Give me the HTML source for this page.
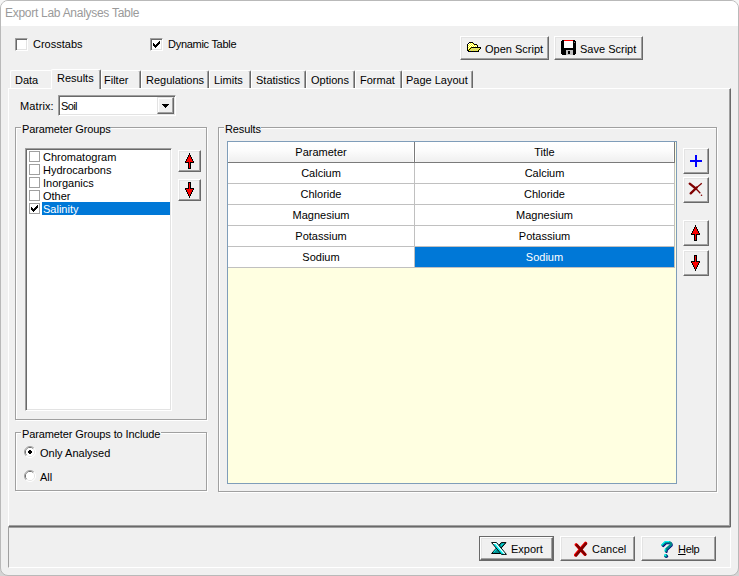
<!DOCTYPE html>
<html><head><meta charset="utf-8">
<title>Export Lab Analyses Table</title>
<style>
*{box-sizing:border-box;margin:0;padding:0}
html,body{width:739px;height:576px;overflow:hidden;background:linear-gradient(#f6f6f6,#f0f0f0 50%,#d4d4d4)}
body{font-family:"Liberation Sans",sans-serif;font-size:11px;color:#000;position:relative}
.abs{position:absolute}
#win{position:absolute;left:0;top:0;width:739px;height:576px;background:#f0f0f0;border-radius:8px;overflow:hidden;border:1px solid #b9b9b9}
#in{position:absolute;left:-1px;top:-1px;width:739px;height:576px}
#titlebar{position:absolute;left:0;top:0;width:739px;height:26px;background:#fff}
#title{position:absolute;left:5px;top:6px;font-size:12px;line-height:14px;color:#9a9a9a;white-space:nowrap;letter-spacing:-0.28px}
.t{position:absolute;white-space:nowrap;line-height:13px;height:13px}
.sunk{border:1px solid;border-color:#a0a0a0 #fff #fff #a0a0a0;box-shadow:inset 1px 1px 0 #696969, inset -1px -1px 0 #e3e3e3}
.btn{background:#f0f0f0;border:1px solid;border-color:#fff #696969 #696969 #fff;box-shadow:inset -1px -1px 0 #a0a0a0, inset 1px 1px 0 #e3e3e3}
.sbtn{background:#f0f0f0;border:1px solid;border-color:#e3e3e3 #696969 #696969 #e3e3e3;box-shadow:inset -1px -1px 0 #a0a0a0, inset 1px 1px 0 #fff}
.tab{position:absolute;top:70px;height:19px;border:1px solid;border-color:#fff #696969 transparent #fff;border-radius:2px 2px 0 0;box-shadow:inset -1px 0 0 #a0a0a0, inset 1px 1px 0 #f0f0f0}
.cbf{position:absolute;width:11px;height:11px;background:#fff;border:1px solid #a0a0a0}
.c{text-align:center}
</style></head><body>
<div id="win"><div id="in">
<div id="titlebar"><div id="title">Export Lab Analyses Table</div></div>

<div class="abs sunk" style="left:15px;top:38px;width:13px;height:13px;background:#fff;"></div>
<div class="t" style="left:33px;top:38px;">Crosstabs</div>
<div class="abs sunk" style="left:150px;top:38px;width:13px;height:13px;background:#fff;"></div>
<svg class="abs" style="left:153px;top:41px" width="7" height="7" viewBox="0 0 7 7" shape-rendering="crispEdges"><path d="M0 2h1v1h1v1h1v-1h1v-1h1v-1h1v-1h1v3h-1v1h-1v1h-1v1h-1v1h-1v-1h-1v-1h-1z" fill="#000"/></svg>
<div class="t" style="left:168px;top:38px;letter-spacing:-0.28px">Dynamic Table</div>
<div class="abs btn" style="left:460px;top:36px;width:89px;height:24px"></div>
<svg class="abs" style="left:467px;top:42px" width="14" height="10" viewBox="0 0 14 10" shape-rendering="crispEdges"><rect x="2" y="0" width="1" height="1" fill="#000"/><rect x="3" y="0" width="1" height="1" fill="#000"/><rect x="4" y="0" width="1" height="1" fill="#000"/><rect x="5" y="0" width="1" height="1" fill="#000"/><rect x="1" y="1" width="1" height="1" fill="#000"/><rect x="2" y="1" width="1" height="1" fill="#ffffff"/><rect x="3" y="1" width="1" height="1" fill="#ffff00"/><rect x="4" y="1" width="1" height="1" fill="#ffffff"/><rect x="5" y="1" width="1" height="1" fill="#ffff00"/><rect x="6" y="1" width="1" height="1" fill="#000"/><rect x="0" y="2" width="1" height="1" fill="#000"/><rect x="1" y="2" width="1" height="1" fill="#ffffff"/><rect x="2" y="2" width="1" height="1" fill="#ffff00"/><rect x="3" y="2" width="1" height="1" fill="#ffffff"/><rect x="4" y="2" width="1" height="1" fill="#ffff00"/><rect x="5" y="2" width="1" height="1" fill="#ffffff"/><rect x="6" y="2" width="1" height="1" fill="#ffff00"/><rect x="7" y="2" width="1" height="1" fill="#000"/><rect x="8" y="2" width="1" height="1" fill="#000"/><rect x="9" y="2" width="1" height="1" fill="#000"/><rect x="0" y="3" width="1" height="1" fill="#000"/><rect x="1" y="3" width="1" height="1" fill="#ffff00"/><rect x="2" y="3" width="1" height="1" fill="#ffffff"/><rect x="3" y="3" width="1" height="1" fill="#ffff00"/><rect x="4" y="3" width="1" height="1" fill="#ffffff"/><rect x="5" y="3" width="1" height="1" fill="#ffff00"/><rect x="6" y="3" width="1" height="1" fill="#ffffff"/><rect x="7" y="3" width="1" height="1" fill="#ffff00"/><rect x="8" y="3" width="1" height="1" fill="#ffffff"/><rect x="9" y="3" width="1" height="1" fill="#ffff00"/><rect x="10" y="3" width="1" height="1" fill="#000"/><rect x="0" y="4" width="1" height="1" fill="#000"/><rect x="1" y="4" width="1" height="1" fill="#ffffff"/><rect x="2" y="4" width="1" height="1" fill="#ffff00"/><rect x="3" y="4" width="1" height="1" fill="#ffffff"/><rect x="4" y="4" width="1" height="1" fill="#ffff00"/><rect x="5" y="4" width="1" height="1" fill="#ffffff"/><rect x="6" y="4" width="1" height="1" fill="#ffff00"/><rect x="7" y="4" width="1" height="1" fill="#ffffff"/><rect x="8" y="4" width="1" height="1" fill="#ffff00"/><rect x="9" y="4" width="1" height="1" fill="#ffffff"/><rect x="10" y="4" width="1" height="1" fill="#000"/><rect x="0" y="5" width="1" height="1" fill="#000"/><rect x="1" y="5" width="1" height="1" fill="#ffff00"/><rect x="2" y="5" width="1" height="1" fill="#ffffff"/><rect x="3" y="5" width="1" height="1" fill="#ffff00"/><rect x="4" y="5" width="1" height="1" fill="#000"/><rect x="5" y="5" width="1" height="1" fill="#000"/><rect x="6" y="5" width="1" height="1" fill="#000"/><rect x="7" y="5" width="1" height="1" fill="#000"/><rect x="8" y="5" width="1" height="1" fill="#000"/><rect x="9" y="5" width="1" height="1" fill="#000"/><rect x="10" y="5" width="1" height="1" fill="#000"/><rect x="11" y="5" width="1" height="1" fill="#000"/><rect x="12" y="5" width="1" height="1" fill="#000"/><rect x="13" y="5" width="1" height="1" fill="#000"/><rect x="0" y="6" width="1" height="1" fill="#000"/><rect x="1" y="6" width="1" height="1" fill="#ffffff"/><rect x="2" y="6" width="1" height="1" fill="#ffff00"/><rect x="3" y="6" width="1" height="1" fill="#000"/><rect x="4" y="6" width="1" height="1" fill="#ffff00"/><rect x="5" y="6" width="1" height="1" fill="#c0c0c0"/><rect x="6" y="6" width="1" height="1" fill="#ffff00"/><rect x="7" y="6" width="1" height="1" fill="#c0c0c0"/><rect x="8" y="6" width="1" height="1" fill="#ffff00"/><rect x="9" y="6" width="1" height="1" fill="#c0c0c0"/><rect x="10" y="6" width="1" height="1" fill="#ffff00"/><rect x="11" y="6" width="1" height="1" fill="#c0c0c0"/><rect x="12" y="6" width="1" height="1" fill="#ffff00"/><rect x="13" y="6" width="1" height="1" fill="#000"/><rect x="0" y="7" width="1" height="1" fill="#000"/><rect x="1" y="7" width="1" height="1" fill="#ffff00"/><rect x="2" y="7" width="1" height="1" fill="#000"/><rect x="3" y="7" width="1" height="1" fill="#ffff00"/><rect x="4" y="7" width="1" height="1" fill="#c0c0c0"/><rect x="5" y="7" width="1" height="1" fill="#ffff00"/><rect x="6" y="7" width="1" height="1" fill="#c0c0c0"/><rect x="7" y="7" width="1" height="1" fill="#ffff00"/><rect x="8" y="7" width="1" height="1" fill="#c0c0c0"/><rect x="9" y="7" width="1" height="1" fill="#ffff00"/><rect x="10" y="7" width="1" height="1" fill="#c0c0c0"/><rect x="11" y="7" width="1" height="1" fill="#ffff00"/><rect x="12" y="7" width="1" height="1" fill="#000"/><rect x="0" y="8" width="1" height="1" fill="#000"/><rect x="1" y="8" width="1" height="1" fill="#000"/><rect x="2" y="8" width="1" height="1" fill="#ffff00"/><rect x="3" y="8" width="1" height="1" fill="#c0c0c0"/><rect x="4" y="8" width="1" height="1" fill="#ffff00"/><rect x="5" y="8" width="1" height="1" fill="#c0c0c0"/><rect x="6" y="8" width="1" height="1" fill="#ffff00"/><rect x="7" y="8" width="1" height="1" fill="#c0c0c0"/><rect x="8" y="8" width="1" height="1" fill="#ffff00"/><rect x="9" y="8" width="1" height="1" fill="#c0c0c0"/><rect x="10" y="8" width="1" height="1" fill="#ffff00"/><rect x="11" y="8" width="1" height="1" fill="#000"/><rect x="1" y="9" width="1" height="1" fill="#000"/><rect x="2" y="9" width="1" height="1" fill="#000"/><rect x="3" y="9" width="1" height="1" fill="#000"/><rect x="4" y="9" width="1" height="1" fill="#000"/><rect x="5" y="9" width="1" height="1" fill="#000"/><rect x="6" y="9" width="1" height="1" fill="#000"/><rect x="7" y="9" width="1" height="1" fill="#000"/><rect x="8" y="9" width="1" height="1" fill="#000"/><rect x="9" y="9" width="1" height="1" fill="#000"/><rect x="10" y="9" width="1" height="1" fill="#000"/><rect x="11" y="9" width="1" height="1" fill="#000"/></svg>
<div class="t" style="left:485px;top:43px;">Open Script</div>
<div class="abs btn" style="left:554px;top:36px;width:89px;height:24px"></div>
<svg class="abs" style="left:561px;top:40px" width="15" height="15" viewBox="0 0 15 15" shape-rendering="crispEdges">
<path d="M1 0h13v1h1v13h-1v1H1v-1H0V1h1z" fill="#000"/>
<rect x="3" y="0" width="9" height="1" fill="#ff0000"/>
<rect x="3" y="1" width="9" height="7" fill="#fff"/>
<rect x="5" y="10" width="7" height="5" fill="#c0c0c0"/>
<rect x="7" y="11" width="2" height="3" fill="#000"/>
<rect x="13" y="2" width="1" height="1" fill="#808080"/>
</svg>
<div class="t" style="left:580px;top:43px;">Save Script</div>
<div class="tab" style="left:10px;width:42px;border-right:none;box-shadow:inset 1px 1px 0 #f0f0f0"></div>
<div class="t" style="left:15px;top:74px;">Data</div>
<div class="tab" style="left:101px;width:40px"></div>
<div class="t" style="left:104px;top:74px;">Filter</div>
<div class="tab" style="left:141px;width:68px"></div>
<div class="t" style="left:146px;top:74px;">Regulations</div>
<div class="tab" style="left:209px;width:42px"></div>
<div class="t" style="left:214px;top:74px;">Limits</div>
<div class="tab" style="left:251px;width:55px"></div>
<div class="t" style="left:256px;top:74px;">Statistics</div>
<div class="tab" style="left:306px;width:49px"></div>
<div class="t" style="left:311px;top:74px;">Options</div>
<div class="tab" style="left:355px;width:47px"></div>
<div class="t" style="left:360px;top:74px;">Format</div>
<div class="tab" style="left:402px;width:71px"></div>
<div class="t" style="left:406px;top:74px;">Page Layout</div>
<div class="abs" style="left:8px;top:88px;width:723px;height:439px;border:1px solid;border-color:#fff #696969 #696969 #fff;box-shadow:inset -1px -1px 0 #a0a0a0"></div>
<div class="tab" style="left:51px;top:69px;width:50px;height:20px;background:#f0f0f0;border-bottom:none"></div>
<div class="abs" style="left:52px;top:88px;width:47px;height:2px;background:#f0f0f0"></div>
<div class="t" style="left:57px;top:72px;">Results</div>
<div class="abs" style="left:8px;top:527px;width:723px;height:41px;border:1px solid;border-color:#a0a0a0 #fff #fff #a0a0a0"></div>
<div class="t" style="left:20px;top:100px;letter-spacing:0.1px">Matrix:</div>
<div class="abs sunk" style="left:58px;top:95px;width:118px;height:21px;background:#fff;"></div>
<div class="t" style="left:61px;top:100px;letter-spacing:-0.6px">Soil</div>
<div class="abs sbtn" style="left:157px;top:97px;width:17px;height:17px"></div>
<svg class="abs" style="left:162px;top:104px" width="7" height="4" viewBox="0 0 7 4" shape-rendering="crispEdges"><path d="M0 0h7v1h-1v1h-1v1h-1v1h-1v-1h-1v-1h-1v-1h-1z" fill="#000"/></svg>
<div class="abs" style="left:16px;top:128px;width:192px;height:293px;border:1px solid #fff"></div><div class="abs" style="left:15px;top:127px;width:192px;height:293px;border:1px solid #a0a0a0;box-shadow:inset 1px 1px 0 #fff"></div><div class="abs" style="left:21px;top:126px;width:88px;height:4px;background:#f0f0f0"></div><div class="t" style="left:22px;top:123px;letter-spacing:-0.11px">Parameter Groups</div>
<div class="abs sunk" style="left:25px;top:148px;width:147px;height:263px;background:#fff;"></div>
<div class="abs" style="left:42px;top:202px;width:128px;height:13px;background:#0078d7"></div>
<div class="cbf" style="left:29px;top:151px"></div>
<div class="t" style="left:43px;top:151px;">Chromatogram</div>
<div class="cbf" style="left:29px;top:164px"></div>
<div class="t" style="left:43px;top:164px;">Hydrocarbons</div>
<div class="cbf" style="left:29px;top:177px"></div>
<div class="t" style="left:43px;top:177px;">Inorganics</div>
<div class="cbf" style="left:29px;top:190px"></div>
<div class="t" style="left:43px;top:190px;">Other</div>
<div class="cbf" style="left:29px;top:203px"></div>
<div class="t" style="left:43px;top:203px;color:#fff">Salinity</div>
<svg class="abs" style="left:31px;top:205px" width="7" height="7" viewBox="0 0 7 7" shape-rendering="crispEdges"><path d="M0 2h1v1h1v1h1v-1h1v-1h1v-1h1v-1h1v3h-1v1h-1v1h-1v1h-1v1h-1v-1h-1v-1h-1z" fill="#000"/></svg>
<div class="abs btn" style="left:178px;top:150px;width:23px;height:22px"></div>
<svg class="abs" style="left:185px;top:153px" width="9" height="16" viewBox="0 0 9 16" shape-rendering="crispEdges"><rect x="4" y="0" width="1" height="1" fill="#000"/><rect x="4" y="1" width="1" height="1" fill="#000"/><rect x="3" y="2" width="3" height="1" fill="#000"/><rect x="3" y="3" width="3" height="1" fill="#000"/><rect x="2" y="4" width="5" height="1" fill="#000"/><rect x="2" y="5" width="5" height="1" fill="#000"/><rect x="1" y="6" width="7" height="1" fill="#000"/><rect x="1" y="7" width="7" height="1" fill="#000"/><rect x="0" y="8" width="9" height="1" fill="#000"/><rect x="0" y="9" width="9" height="1" fill="#000"/><rect x="3" y="10" width="3" height="1" fill="#000"/><rect x="3" y="11" width="3" height="1" fill="#000"/><rect x="3" y="12" width="3" height="1" fill="#000"/><rect x="3" y="13" width="3" height="1" fill="#000"/><rect x="3" y="14" width="3" height="1" fill="#000"/><rect x="3" y="15" width="3" height="1" fill="#000"/><rect x="4" y="2" width="1" height="1" fill="#ff0000"/><rect x="4" y="3" width="1" height="1" fill="#ff0000"/><rect x="3" y="4" width="3" height="1" fill="#ff0000"/><rect x="3" y="5" width="3" height="1" fill="#ff0000"/><rect x="2" y="6" width="5" height="1" fill="#ff0000"/><rect x="2" y="7" width="5" height="1" fill="#ff0000"/><rect x="1" y="8" width="7" height="1" fill="#ff0000"/><rect x="4" y="9" width="1" height="1" fill="#ff0000"/><rect x="4" y="10" width="1" height="1" fill="#ff0000"/><rect x="4" y="11" width="1" height="1" fill="#ff0000"/><rect x="4" y="12" width="1" height="1" fill="#ff0000"/><rect x="4" y="13" width="1" height="1" fill="#ff0000"/><rect x="4" y="14" width="1" height="1" fill="#ff0000"/></svg>
<div class="abs btn" style="left:178px;top:179px;width:23px;height:22px"></div>
<svg class="abs" style="left:185px;top:182px" width="9" height="16" viewBox="0 0 9 16" shape-rendering="crispEdges"><rect x="4" y="15" width="1" height="1" fill="#000"/><rect x="4" y="14" width="1" height="1" fill="#000"/><rect x="3" y="13" width="3" height="1" fill="#000"/><rect x="3" y="12" width="3" height="1" fill="#000"/><rect x="2" y="11" width="5" height="1" fill="#000"/><rect x="2" y="10" width="5" height="1" fill="#000"/><rect x="1" y="9" width="7" height="1" fill="#000"/><rect x="1" y="8" width="7" height="1" fill="#000"/><rect x="0" y="7" width="9" height="1" fill="#000"/><rect x="0" y="6" width="9" height="1" fill="#000"/><rect x="3" y="5" width="3" height="1" fill="#000"/><rect x="3" y="4" width="3" height="1" fill="#000"/><rect x="3" y="3" width="3" height="1" fill="#000"/><rect x="3" y="2" width="3" height="1" fill="#000"/><rect x="3" y="1" width="3" height="1" fill="#000"/><rect x="3" y="0" width="3" height="1" fill="#000"/><rect x="4" y="13" width="1" height="1" fill="#ff0000"/><rect x="4" y="12" width="1" height="1" fill="#ff0000"/><rect x="3" y="11" width="3" height="1" fill="#ff0000"/><rect x="3" y="10" width="3" height="1" fill="#ff0000"/><rect x="2" y="9" width="5" height="1" fill="#ff0000"/><rect x="2" y="8" width="5" height="1" fill="#ff0000"/><rect x="1" y="7" width="7" height="1" fill="#ff0000"/><rect x="4" y="6" width="1" height="1" fill="#ff0000"/><rect x="4" y="5" width="1" height="1" fill="#ff0000"/><rect x="4" y="4" width="1" height="1" fill="#ff0000"/><rect x="4" y="3" width="1" height="1" fill="#ff0000"/><rect x="4" y="2" width="1" height="1" fill="#ff0000"/><rect x="4" y="1" width="1" height="1" fill="#ff0000"/></svg>
<div class="abs" style="left:16px;top:433px;width:192px;height:59px;border:1px solid #fff"></div><div class="abs" style="left:15px;top:432px;width:192px;height:59px;border:1px solid #a0a0a0;box-shadow:inset 1px 1px 0 #fff"></div><div class="abs" style="left:21px;top:431px;width:140px;height:4px;background:#f0f0f0"></div><div class="t" style="left:22px;top:428px;letter-spacing:-0.11px">Parameter Groups to Include</div>
<svg class="abs" style="left:24px;top:446px" width="12" height="12" viewBox="0 0 12 12">
<circle cx="6" cy="6" r="5.500" fill="#fff"/>
<path d="M2.100 9.900A5.500 5.500 0 0 1 9.900 2.100" fill="none" stroke="#a0a0a0" stroke-width="1"/>
<path d="M2.800 9.200A4.500 4.500 0 0 1 9.200 2.800" fill="none" stroke="#696969" stroke-width="1"/>
<path d="M9.900 2.100A5.500 5.500 0 0 1 2.100 9.900" fill="none" stroke="#fff" stroke-width="1"/>
<path d="M9.200 2.800A4.500 4.500 0 0 1 2.800 9.200" fill="none" stroke="#e3e3e3" stroke-width="1"/>
<circle cx="6" cy="6" r="4" fill="#fff"/><rect x="4" y="5" width="4" height="2" fill="#000"/><rect x="5" y="4" width="2" height="4" fill="#000"/></svg>
<div class="t" style="left:40px;top:447px;">Only Analysed</div>
<svg class="abs" style="left:24px;top:470px" width="12" height="12" viewBox="0 0 12 12">
<circle cx="6" cy="6" r="5.500" fill="#fff"/>
<path d="M2.100 9.900A5.500 5.500 0 0 1 9.900 2.100" fill="none" stroke="#a0a0a0" stroke-width="1"/>
<path d="M2.800 9.200A4.500 4.500 0 0 1 9.200 2.800" fill="none" stroke="#696969" stroke-width="1"/>
<path d="M9.900 2.100A5.500 5.500 0 0 1 2.100 9.900" fill="none" stroke="#fff" stroke-width="1"/>
<path d="M9.200 2.800A4.500 4.500 0 0 1 2.800 9.200" fill="none" stroke="#e3e3e3" stroke-width="1"/>
<circle cx="6" cy="6" r="4" fill="#fff"/></svg>
<div class="t" style="left:40px;top:471px;">All</div>
<div class="abs" style="left:219px;top:128px;width:499px;height:365px;border:1px solid #fff"></div><div class="abs" style="left:218px;top:127px;width:499px;height:365px;border:1px solid #a0a0a0;box-shadow:inset 1px 1px 0 #fff"></div><div class="abs" style="left:224px;top:126px;width:37px;height:4px;background:#f0f0f0"></div><div class="t" style="left:225px;top:123px;letter-spacing:-0.11px">Results</div>
<div class="abs" style="left:227px;top:141px;width:450px;height:343px;background:#ffffe1;border:1px solid #7f9db9"></div>
<div class="abs" style="left:228px;top:142px;width:447px;height:126px;background:#fff"></div>
<div class="abs" style="left:228px;top:142px;width:186px;height:20px;background:linear-gradient(#fff,#fcfcfc 40%,#efefef);border:1px solid #fff;border-bottom:none"></div>
<div class="abs" style="left:415px;top:142px;width:259px;height:20px;background:linear-gradient(#fff,#fcfcfc 40%,#efefef);border:1px solid #fff;border-bottom:none"></div>
<div class="abs" style="left:228px;top:162px;width:447px;height:1px;background:#7a7a7a"></div>
<div class="abs" style="left:414px;top:142px;width:1px;height:20px;background:#7a7a7a"></div>
<div class="abs" style="left:674px;top:142px;width:1px;height:20px;background:#7a7a7a"></div>
<div class="abs" style="left:414px;top:163px;width:1px;height:105px;background:#c0c0c0"></div>
<div class="abs" style="left:674px;top:163px;width:1px;height:105px;background:#c0c0c0"></div>
<div class="abs" style="left:228px;top:183px;width:447px;height:1px;background:#c0c0c0"></div>
<div class="abs" style="left:228px;top:204px;width:447px;height:1px;background:#c0c0c0"></div>
<div class="abs" style="left:228px;top:225px;width:447px;height:1px;background:#c0c0c0"></div>
<div class="abs" style="left:228px;top:246px;width:447px;height:1px;background:#c0c0c0"></div>
<div class="abs" style="left:228px;top:267px;width:447px;height:1px;background:#c0c0c0"></div>
<div class="abs" style="left:415px;top:247px;width:259px;height:20px;background:#0078d7"></div>
<div class="t c" style="left:228px;width:186px;top:146px">Parameter</div>
<div class="t c" style="left:415px;width:259px;top:146px">Title</div>
<div class="t c" style="left:228px;width:186px;top:167px">Calcium</div>
<div class="t c" style="left:415px;width:259px;top:167px">Calcium</div>
<div class="t c" style="left:228px;width:186px;top:188px">Chloride</div>
<div class="t c" style="left:415px;width:259px;top:188px">Chloride</div>
<div class="t c" style="left:228px;width:186px;top:209px">Magnesium</div>
<div class="t c" style="left:415px;width:259px;top:209px">Magnesium</div>
<div class="t c" style="left:228px;width:186px;top:230px">Potassium</div>
<div class="t c" style="left:415px;width:259px;top:230px">Potassium</div>
<div class="t c" style="left:228px;width:186px;top:251px">Sodium</div>
<div class="t c" style="left:415px;width:259px;top:251px;color:#fff">Sodium</div>
<div class="abs btn" style="left:683px;top:148px;width:26px;height:26px"></div>
<svg class="abs" style="left:690px;top:155px" width="12" height="12" viewBox="0 0 12 12" shape-rendering="crispEdges"><rect x="5" y="0" width="2" height="12" fill="#0000ff"/><rect x="0" y="5" width="12" height="2" fill="#0000ff"/></svg>
<div class="abs btn" style="left:683px;top:177px;width:26px;height:26px"></div>
<svg class="abs" style="left:688px;top:182px" width="15" height="15" viewBox="0 0 15 15">
<path d="M1.700 1.700L7.800 6.500" stroke="#800000" stroke-width="2.300" stroke-linecap="round" fill="none"/>
<path d="M7.800 6.500L12.300 11.300" stroke="#800000" stroke-width="1.300" fill="none"/>
<circle cx="13.500" cy="13.300" r=".8" fill="#800000"/>
<path d="M13.800 1.300L8.800 5.500" stroke="#800000" stroke-width="1.300" fill="none"/>
<path d="M8.800 5.500L2.700 11.300" stroke="#800000" stroke-width="2.400" stroke-linecap="round" fill="none"/>
</svg>
<div class="abs btn" style="left:683px;top:220px;width:26px;height:26px"></div>
<svg class="abs" style="left:691px;top:225px" width="9" height="16" viewBox="0 0 9 16" shape-rendering="crispEdges"><rect x="4" y="0" width="1" height="1" fill="#000"/><rect x="4" y="1" width="1" height="1" fill="#000"/><rect x="3" y="2" width="3" height="1" fill="#000"/><rect x="3" y="3" width="3" height="1" fill="#000"/><rect x="2" y="4" width="5" height="1" fill="#000"/><rect x="2" y="5" width="5" height="1" fill="#000"/><rect x="1" y="6" width="7" height="1" fill="#000"/><rect x="1" y="7" width="7" height="1" fill="#000"/><rect x="0" y="8" width="9" height="1" fill="#000"/><rect x="0" y="9" width="9" height="1" fill="#000"/><rect x="3" y="10" width="3" height="1" fill="#000"/><rect x="3" y="11" width="3" height="1" fill="#000"/><rect x="3" y="12" width="3" height="1" fill="#000"/><rect x="3" y="13" width="3" height="1" fill="#000"/><rect x="3" y="14" width="3" height="1" fill="#000"/><rect x="3" y="15" width="3" height="1" fill="#000"/><rect x="4" y="2" width="1" height="1" fill="#ff0000"/><rect x="4" y="3" width="1" height="1" fill="#ff0000"/><rect x="3" y="4" width="3" height="1" fill="#ff0000"/><rect x="3" y="5" width="3" height="1" fill="#ff0000"/><rect x="2" y="6" width="5" height="1" fill="#ff0000"/><rect x="2" y="7" width="5" height="1" fill="#ff0000"/><rect x="1" y="8" width="7" height="1" fill="#ff0000"/><rect x="4" y="9" width="1" height="1" fill="#ff0000"/><rect x="4" y="10" width="1" height="1" fill="#ff0000"/><rect x="4" y="11" width="1" height="1" fill="#ff0000"/><rect x="4" y="12" width="1" height="1" fill="#ff0000"/><rect x="4" y="13" width="1" height="1" fill="#ff0000"/><rect x="4" y="14" width="1" height="1" fill="#ff0000"/></svg>
<div class="abs btn" style="left:683px;top:250px;width:26px;height:26px"></div>
<svg class="abs" style="left:691px;top:255px" width="9" height="16" viewBox="0 0 9 16" shape-rendering="crispEdges"><rect x="4" y="15" width="1" height="1" fill="#000"/><rect x="4" y="14" width="1" height="1" fill="#000"/><rect x="3" y="13" width="3" height="1" fill="#000"/><rect x="3" y="12" width="3" height="1" fill="#000"/><rect x="2" y="11" width="5" height="1" fill="#000"/><rect x="2" y="10" width="5" height="1" fill="#000"/><rect x="1" y="9" width="7" height="1" fill="#000"/><rect x="1" y="8" width="7" height="1" fill="#000"/><rect x="0" y="7" width="9" height="1" fill="#000"/><rect x="0" y="6" width="9" height="1" fill="#000"/><rect x="3" y="5" width="3" height="1" fill="#000"/><rect x="3" y="4" width="3" height="1" fill="#000"/><rect x="3" y="3" width="3" height="1" fill="#000"/><rect x="3" y="2" width="3" height="1" fill="#000"/><rect x="3" y="1" width="3" height="1" fill="#000"/><rect x="3" y="0" width="3" height="1" fill="#000"/><rect x="4" y="13" width="1" height="1" fill="#ff0000"/><rect x="4" y="12" width="1" height="1" fill="#ff0000"/><rect x="3" y="11" width="3" height="1" fill="#ff0000"/><rect x="3" y="10" width="3" height="1" fill="#ff0000"/><rect x="2" y="9" width="5" height="1" fill="#ff0000"/><rect x="2" y="8" width="5" height="1" fill="#ff0000"/><rect x="1" y="7" width="7" height="1" fill="#ff0000"/><rect x="4" y="6" width="1" height="1" fill="#ff0000"/><rect x="4" y="5" width="1" height="1" fill="#ff0000"/><rect x="4" y="4" width="1" height="1" fill="#ff0000"/><rect x="4" y="3" width="1" height="1" fill="#ff0000"/><rect x="4" y="2" width="1" height="1" fill="#ff0000"/><rect x="4" y="1" width="1" height="1" fill="#ff0000"/></svg>
<div class="abs" style="left:479px;top:536px;width:75px;height:25px;border:1px solid #696969"></div>
<div class="abs btn" style="left:480px;top:537px;width:73px;height:23px"></div>
<svg class="abs" style="left:491px;top:542px" width="16" height="13" viewBox="0 0 16 13">
<path d="M10.300 0.600H15L8 8.500L10.500 11.500H0.600z" fill="#009090" stroke="#000" stroke-width="1"/>
<path d="M2.500 10.300L7 5.500" stroke="#00ffff" stroke-width="1" fill="none"/>
<path d="M10 3.500L12.500 1.500" stroke="#00ffff" stroke-width="1" fill="none"/>
<path d="M0.600 0.600H5.500L15.400 12.400H10.500z" fill="#00f0f0" stroke="#000" stroke-width="1"/>
<path d="M2 1.500H4.800L13.600 11.800" fill="none" stroke="#fff" stroke-width="1.200"/>
</svg>
<div class="t" style="left:511px;top:543px;">Export</div>
<div class="abs btn" style="left:560px;top:536px;width:75px;height:25px"></div>
<svg class="abs" style="left:574px;top:541px" width="14" height="16" viewBox="0 -1 14 16">
<path d="M2.200 2.700L10.800 12.200" stroke="#ff0000" stroke-width="3.200" stroke-linecap="round" fill="none"/>
<path d="M11.500 1.300L1.500 13" stroke="#ff0000" stroke-width="3.200" stroke-linecap="round" fill="none"/>
<path d="M2.800 3.100L11.300 12.500" stroke="#800000" stroke-width="2.600" stroke-linecap="round" fill="none"/>
<path d="M11.900 1.700L2.100 13.300" stroke="#800000" stroke-width="2.600" stroke-linecap="round" fill="none"/>
</svg>
<div class="t" style="left:592px;top:543px;">Cancel</div>
<div class="abs btn" style="left:641px;top:536px;width:75px;height:25px"></div>
<svg class="abs" style="left:660px;top:540px" width="14" height="19" viewBox="0 0 14 19">
<g fill="none" stroke-linecap="round" stroke-linejoin="round">
<path d="M3.200 6L6 3.200L9.500 3Q11.800 3.300 11.600 5.500L6.800 9.900L6.500 11.800" stroke="#000080" stroke-width="2.300"/>
<path d="M2.400 5.200L5.400 2.400L9 2.200Q11.200 2.500 11 4.800L6.200 9.200L5.800 11.100" stroke="#008888" stroke-width="2.300"/>
<path d="M1.900 4.700L5 1.700L9 1.500" stroke="#00ffff" stroke-width="1.100"/>
<path d="M5.300 8.800L4.900 10.800" stroke="#00ffff" stroke-width="1"/>
</g>
<circle cx="6.300" cy="16.300" r="1.800" fill="#000080"/>
<circle cx="5.800" cy="15.800" r="1.700" fill="#008888"/>
<circle cx="5.200" cy="15.200" r=".9" fill="#00ffff"/>
</svg>
<div class="t" style="left:678px;top:543px;letter-spacing:-0.3px"><u>H</u>elp</div>
</div></div>
</body></html>
